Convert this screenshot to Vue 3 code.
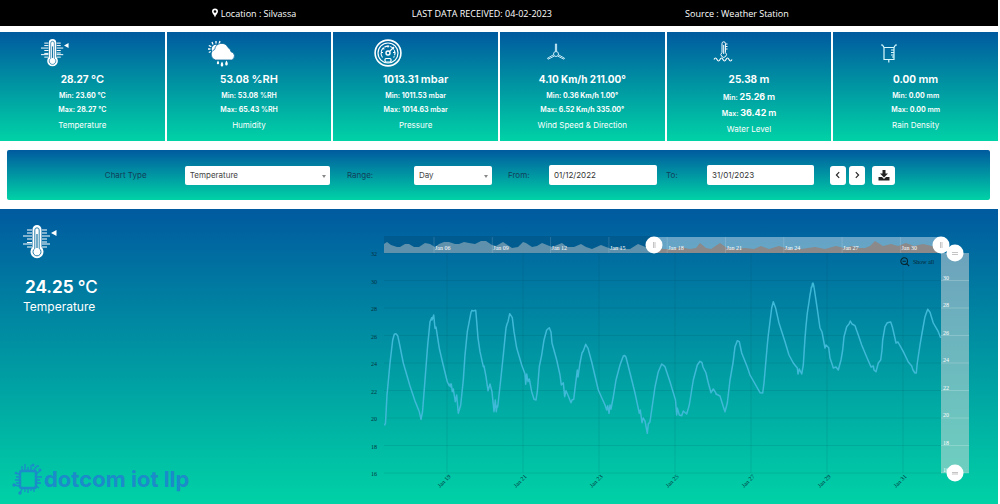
<script setup>
import { ref } from 'vue'

const cards = [
  { icon: 'thermo', value: '28.27', unit: '°C', min: '23.60', max: '28.27', label: 'Temperature' },
  { icon: 'cloud', value: '53.08', unit: '%RH', min: '53.08', max: '65.43', label: 'Humidity' },
  { icon: 'gauge', value: '1013.31', unit: 'mbar', min: '1011.53', max: '1014.63', label: 'Pressure' },
  { icon: 'wind', value: '4.10 Km/h 211.00°', unit: '', min: '0.36 Km/h 1.00°', max: '6.52 Km/h 335.00°', label: 'Wind Speed & Direction' },
  { icon: 'level', value: '25.38', unit: 'm', min: '25.26', max: '36.42', label: 'Water Level', large: true },
  { icon: 'rain', value: '0.00', unit: 'mm', min: '0.00', max: '0.00', label: 'Rain Density' }
]

const chartType = ref('Temperature')
const range = ref('Day')
const from = ref('01/12/2022')
const to = ref('31/01/2023')

const rows = [32, 30, 28, 26, 24, 22, 20, 18, 16].map((v, i) => ({ v, y: 44 + i * 27.5 }))
const days = ['19', '21', '23', '25', '27', '29', '31'].map((d, i) => ({ d, x: 87 + i * 76 }))
const overview = ['06', '09', '12', '15', '18', '21', '24', '27', '30'].map((d, i) => ({ d, x: 74 + i * 58.3 }))

const series = `384.5,425.5 385.5,423 387,395 390,363 392.7,340 394.3,334.3 396,333.7 397.7,335.7 399.3,343 403.3,363 410,386 415,401 419.3,411.7 421,419.3 422.5,412 425,380 427.7,345 430,321.7 431.7,317.7 432,320 433.7,315 435,328.3 436,327 439.3,348.3 442.7,363 447.3,381.7 449.3,386 450,384 451,387 451.3,384 452.3,391.7 453.3,389 455.3,401.7 456.7,395 458.3,413.3 460.7,405 463.3,380 465,355 467.3,331.7 471,312.3 472,310.3 473,311 475.7,310.3 476.3,316.7 478,338 480,351.7 483.3,366.7 484,366 486,376.7 488,390.7 490,384 492,391.7 494,411.7 495.3,400 496.3,411.7 497,406 497.7,407 500.7,380 503.3,355 506,328 507,324 508,321.7 509.7,313.7 512.3,317.7 514,331.7 516.7,348 521.7,365 525,374 525.7,384.3 526.7,374 528,381.7 529.3,379 531.7,391.7 534,399.3 536,400 537.3,391.7 539.3,366.7 541.7,355 544,340 546.7,330 549.3,327.7 551,332 552,343 556.7,360 560,375 561.3,385 563.3,382.7 564.7,396.7 566,390.7 568.3,396 571,402.7 572,400 573.7,399.3 575.7,383 577.3,370 578,377 580,363 582,353 583.3,351 585.7,344.3 588,348.3 591.7,362 598.3,390 605,405 606.7,410 607.7,405.7 609,413.3 610,405 611,409 613.3,397 616,380 620,365 623.3,356 624.7,355.5 626,357.3 630,373 635,393 639.3,413.3 640.3,410 642,422.7 643.3,418 645,421 647.3,433.3 648.3,424 650,421.7 652.7,403 655,387 658.3,371.7 661.7,364 665,366.7 670,381.7 675.5,400 676.7,415 677.3,408 679.3,415 681.7,415.7 683.3,411 686.7,414 689.3,405 693.3,380 697.3,365 700,361.3 702,362.7 703,367 706,373 708.3,383 711,392.7 713.3,389 715.7,392.7 716,394 720,396 723.3,406.7 725,411.7 727.3,403 730,380 733,363 735,346.7 737.3,340.7 739.3,341.7 741.7,353 747.3,367 750,375 760,392.7 762.7,393 764,383 767.3,345 768.3,335 771.7,308 773.3,301.7 775.7,308.3 779,323 785,341.7 789,355 793.3,363 797.3,368 798,374 799.3,369 801.7,374 803.3,365 805,338 806,326 807.3,313 809,302 810,295 811,290 811.3,287 812,287 812.3,284 813,283 814,287 816.7,305 820,328 822,332 825,348 826,345 828.7,347.7 830,358 831.7,363 833.3,368 836,367 838.3,370 841,360 842.7,350 844,336.7 846.7,326.7 849,324 850.3,321 852,324 855,325.7 858.3,335 861.7,345 866.7,357 871,367 873.3,366 874,370 876,371.7 878.3,363 880.7,360 882,350 882.7,340 885,326.7 887.3,322.7 890.7,322 892.3,326.7 894,334 896,343 898,342 903.3,351.7 908.3,362 911.7,366 913,370 915,373 916.3,373 917.3,363 920,345 921.7,335 925,316.7 927.7,309.3 930,312.3 933.3,323 938.3,331.7 940.7,338`

const overviewLeft = `384,253 384,244 387,242 391,245 397,247 400,247 405,244 409,244 414,247 419,247 425,243 430,244 435,247 439,244 444,242 449,242 455,244 459,244 464,242 469,243 475,244 481,241 486,241 492,245 496,246 503,242 506,244 512,248 518,247 523,242 526,243 532,247 537,246 542,243 547,245 552,247 557,245 562,243 567,247 574,247 581,244 586,247 592,249 601,245 606,247 612,249 618,247 624,249 630,249 638,244 643,246 648,248 653,247 653,253`
const overviewRight = `653,253 653,247 659,248 664,249 674,249 680,247 690,249 696,248 700,243 706,248 711,249 720,243 727,248 736,249 745,248 754,249 761,246 769,249 779,246 789,249 801,249 815,247 825,249 836,246 844,248 852,246 859,248 865,248 870,246 875,241 883,246 891,244 898,246 906,243 914,246 923,244 932,246 941,245 941,253`
</script>

<template>
  <div class="page">
    <svg class="defs" width="0" height="0" aria-hidden="true">
      <symbol id="thermo" viewBox="0 0 34 34">
        <g fill="none" stroke="#fff" stroke-width="1.2">
          <path d="M4 5h5M0 11h9M4 8h5M4 14h5M4 17.500h5M0 19h9M4 22h5M19 5h5M19 8h5M19 11h8M19 14h5M19 17h5M19 19h8M19 22h5" />
        </g>
        <path d="M14 0a4.500 4.500 0 0 0-4.500 4.500V22a6.500 6.500 0 1 0 9 0V4.500A4.500 4.500 0 0 0 14 0z" fill="#fff" />
        <path d="M11.800 5a2.200 2.200 0 0 1 4.400 0v18.500a4 4 0 1 1-4.400 0z" fill="none" stroke="#1473a2" stroke-width=".9" />
        <path d="M14 9v14" stroke="#1473a2" stroke-width="1.200" />
        <path d="M28 8l5.500-3v6z" fill="#fff" />
      </symbol>
      <symbol id="cloud" viewBox="0 0 28 28">
        <g stroke="#fff" stroke-width="1.300"><path d="M8 2v2.500M4 3l1 2.500M.800 6.500l2.500 1.200M0 10h2.500M.800 13.500l2-1M12 2l-1 3" /></g>
        <circle cx="8" cy="10" r="4.300" fill="#fff" />
        <path d="M7.500 21a5.500 5.500 0 0 1-.8-10.500A7 7 0 0 1 20 8.500a5.500 5.500 0 0 1 3 4.200A4.300 4.300 0 0 1 23.500 21z" fill="#fff" stroke="#086a9e" stroke-width=".8" />
        <path d="M10 21.500c-1.900 2.800-1 3.700 0 3.700s1.900-.9 0-3.700zM14 22.500c-2.200 3.200-1.200 5 0 5s2.200-1.800 0-5zM18.500 21.500c-2.200 3.200-1.200 5 0 5s2.200-1.800 0-5z" fill="#fff" />
      </symbol>
      <symbol id="gauge" viewBox="0 0 28 28">
        <g fill="none" stroke="#fff">
          <circle cx="14" cy="14" r="12.900" stroke-width="1.600" />
          <circle cx="14" cy="14" r="10" stroke-width="1.200" />
          <path d="M8.500 18.500a7 7 0 1 1 11 0" stroke-width="1.100" stroke-dasharray="5 .8" />
          <path d="M14 6.500v2M7 13.500h2M19 13.500h2M9 9l1.300 1.300M15 13l5-5" stroke-width="1.200" />
          <circle cx="14" cy="14" r="2" stroke-width="1.400" />
          <rect x="11" y="19.500" width="6" height="3.500" rx="1" stroke-width="1.200" />
        </g>
      </symbol>
      <symbol id="wind" viewBox="0 0 28 28">
        <g fill="none" stroke="#d9f4ff" stroke-width=".9" stroke-linejoin="round">
          <circle cx="15" cy="15" r="2.500" />
          <path d="M14.400 12.500V5h1.200v7.500M12.500 15.800L6.500 19.200l.6 1 6-3M17.500 15.800l6 3.400-.6 1-6-3" />
        </g>
      </symbol>
      <symbol id="level" viewBox="0 0 28 28">
        <g fill="none" stroke="#fff" stroke-width="1">
          <path d="M14 13.500V4.500a1.700 1.700 0 0 1 3.400 0v9a2.700 2.700 0 1 1-3.400 0z" />
          <path d="M15.700 6v9M17.500 5h2M17.500 7.500h2M17.500 10h2" />
          <path d="M6 20.500c1-2 2-2 3 0s2 2 3 0 2-2 3 0 2 2 3 0 2-2 3 0 2 2 3 0" stroke-width="1.200" />
        </g>
      </symbol>
      <symbol id="rain" viewBox="0 0 28 28">
        <path d="M7 6h1.500l1.500 2.500v12h10v-12L21.500 6H23M10 8.500h10M14.800 20.500v3M17 11h3M17 13.500h3M17 16h3M18 18h2" fill="none" stroke="#d9fbff" stroke-width="1.200" />
      </symbol>
    </svg>

    <header class="topbar">
      <span class="location">
        <svg viewBox="0 0 12 18" aria-hidden="true"><path fill-rule="evenodd" d="M6 0a6 6 0 0 0-6 6c0 4 4.500 6 6 12 1.500-6 6-8 6-12a6 6 0 0 0-6-6zm0 3.300a2.700 2.700 0 1 1 0 5.400 2.700 2.700 0 0 1 0-5.400z" fill="#fff" /></svg>
        Location : Silvassa
      </span>
      <span>LAST DATA RECEIVED: 04-02-2023</span>
      <span>Source : Weather Station</span>
    </header>

    <section class="cards">
      <article v-for="c in cards" :key="c.label" class="card" :class="{ large: c.large }">
        <svg class="card-icon" aria-hidden="true"><use :href="'#' + c.icon" /></svg>
        <p class="value">{{ c.value }} <span v-if="c.unit">{{ c.unit }}</span></p>
        <p class="stat">Min: <b>{{ c.min }}</b> <small>{{ c.unit }}</small></p>
        <p class="stat">Max: <b>{{ c.max }}</b> <small>{{ c.unit }}</small></p>
        <p class="name">{{ c.label }}</p>
      </article>
    </section>

    <form class="filters" @submit.prevent>
      <label for="type">Chart Type</label>
      <div class="select">
        <select id="type" v-model="chartType"><option v-for="c in cards" :key="c.label">{{ c.label }}</option></select>
      </div>
      <label for="range">Range:</label>
      <div class="select">
        <select id="range" v-model="range"><option>Day</option><option>Week</option><option>Month</option></select>
      </div>
      <label for="from">From:</label>
      <input id="from" v-model="from" type="text">
      <label for="to">To:</label>
      <input id="to" v-model="to" type="text">
      <div class="actions">
        <button type="button" aria-label="Previous"><svg viewBox="0 0 10 10"><path d="M6.500 1.500L3 5l3.500 3.500" /></svg></button>
        <button type="button" aria-label="Next"><svg viewBox="0 0 10 10"><path d="M3.500 1.500L7 5 3.500 8.500" /></svg></button>
        <button type="button" class="download" aria-label="Download"><svg viewBox="0 0 12 12"><path d="M4.500 1h3v3.500H10L6 8.500 2 4.500h2.500zM.500 8H4l2 2 2-2h3.500v3.500H.500z" /></svg></button>
      </div>
    </form>

    <main class="detail">
      <aside class="summary">
        <svg class="big-icon" aria-hidden="true"><use href="#thermo" /></svg>
        <p class="big-value">24.25 <span>°C</span></p>
        <p class="big-name">Temperature</p>
        <div class="brand">
          <svg viewBox="0 0 32 32" aria-hidden="true">
            <rect x="8" y="8" width="16" height="17" rx="2" fill="none" stroke="#1b8bc9" stroke-width="2.500" />
            <path d="M10 7V3M13 7V1M16 7V4M19 7V2M22 7l3-4h2M24 11l4-3M25 14h5M25 17h3M25 20h4M24 23l3 2M22 26v3M19 26v2M16 26v4M13 26v3M10 26l-2 4M7 23l-5-1M7 20H4M7 17H3M7 14H4M7 11L3 10" fill="none" stroke="#1b8bc9" stroke-width="1.300" />
            <g fill="#1b8bc9"><circle cx="21" cy="2" r="1.500" /><circle cx="28" cy="7" r="1.500" /><circle cx="2" cy="22" r="1.700" /><circle cx="8" cy="30" r="1.700" /><circle cx="4" cy="10" r="1.300" /></g>
          </svg>
          <span>dotcom iot llp</span>
        </div>
      </aside>

      <div class="chart">
        <svg class="plot" viewBox="0 0 638 295" role="img" aria-label="Temperature over time">
          <g stroke="#003c50" stroke-opacity=".13" stroke-width="1">
            <line v-for="r in rows" :key="r.v" x1="24" x2="581" :y1="r.y" :y2="r.y" />
            <line v-for="d in days" :key="d.d" :x1="d.x" :x2="d.x" y1="44" y2="264" />
          </g>
          <rect x="24" y="27" width="269" height="17" fill="#00507f" fill-opacity=".5" />
          <rect x="293" y="28" width="288" height="16" fill="#fff" fill-opacity=".4" />
          <g transform="translate(-360 -209)">
            <polygon :points="overviewLeft" fill="#5f91ac" />
            <polygon :points="overviewRight" fill="#8b8989" />
          </g>
          <g class="axis light">
            <template v-for="o in overview" :key="o.d">
              <line :x1="o.x" :x2="o.x" y1="28" y2="44" stroke="#fff" stroke-opacity=".15" />
              <text :x="o.x + 1" y="41">Jan {{ o.d }}</text>
            </template>
          </g>
          <g transform="translate(-360 -209)">
            <polyline :points="series" fill="none" stroke="#3fb9d8" stroke-width="1.500" stroke-linejoin="round" />
          </g>
          <rect x="581" y="44" width="28" height="220" fill="#d9d9d9" fill-opacity=".5" />
          <g class="axis">
            <text v-for="r in rows" :key="r.v" x="17" :y="r.y + 3" text-anchor="end">{{ r.v }}</text>
            <text v-for="d in days" :key="d.d" :transform="`translate(${d.x + 4} 268) rotate(-45)`" text-anchor="end">Jan {{ d.d }}</text>
          </g>
          <g class="axis light">
            <template v-for="r in rows.slice(1)" :key="r.v">
              <line x1="581" x2="609" :y1="r.y" :y2="r.y" stroke="#fff" stroke-opacity=".2" />
              <text x="583" :y="r.y - 1">{{ r.v }}</text>
            </template>
          </g>
          <g fill="#fff">
            <circle cx="294" cy="36" r="8.500" /><circle cx="581" cy="36" r="8.500" />
            <circle cx="595" cy="44" r="8.500" /><circle cx="595" cy="264" r="8.500" />
          </g>
          <path d="M293.500 33v6M295 33v6M580.500 33v6M582 33v6M592 43.500h6M592 45.500h6M592 263.500h6M592 265h6" stroke="#aaa" stroke-width=".7" />
        </svg>
        <button type="button" class="show-all">
          <svg viewBox="0 0 12 12" aria-hidden="true"><circle cx="5" cy="5" r="4" /><path d="M3 5h4M8 8l3 3" /></svg>
          Show all
        </button>
      </div>
    </main>
  </div>
</template>

<style>
body { margin: 0; background: #fff; }
</style>

<style scoped>
.page {
  --grad: linear-gradient(#005a9f, #00d2a6);
  display: flex;
  flex-direction: column;
  min-height: 100vh;
  padding-right: 2px;
  box-sizing: border-box;
  font-family: Inter, "Liberation Sans", sans-serif;
  color: #fff;
}
.page * { box-sizing: border-box; }
.defs { position: absolute; }
p { margin: 0; }
.topbar {
  display: grid;
  grid-template-columns: 228fr 227fr 282fr;
  padding: 0 12% 0 14%;
  height: 26px;
  align-items: center;
  text-align: center;
  background: #000;
  font-family: "Open Sans", "Noto Sans", sans-serif;
  font-size: 9px;
}
.location { display: flex; justify-content: center; align-items: center; gap: 3px; }
.location svg { width: 6px; height: 10px; }
.cards {
  display: grid;
  grid-template-columns: repeat(6, 1fr);
  gap: 2px;
  margin-top: 6px;
}
.card {
  min-height: 109px;
  padding-top: 7px;
  background: var(--grad);
  text-align: center;
}
.card-icon { display: block; width: 28px; height: 28px; margin-left: 25%; }
.value { margin-top: 5px; font-size: 10px; line-height: 15px; font-weight: 700; }
.value span { font-size: 11px; font-weight: 600; }
.stat { font-size: 7px; line-height: 14px; font-weight: 600; }
.value + .stat { margin-top: 2px; }
.stat b { font-weight: 700; }
.stat small { font-size: 7px; }
.name { font-size: 8px; line-height: 16px; }
.large .stat { line-height: 15px; }
.large .stat b, .large .stat small { font-size: 9px; }
.filters {
  display: grid;
  grid-template-columns: 80fr 145fr 17fr 67fr 78fr 16fr 41fr 108fr 9fr 41fr 107fr 16fr 62fr;
  align-items: center;
  margin: 9px 8px 0 7px;
  padding: 0 9.8%;
  height: 50px;
  border-radius: 2px;
  background: var(--grad);
  color: #12405a;
  font-size: 8px;
}
.filters label[for="range"] { grid-column: 4; }
.filters label[for="from"] { grid-column: 7; }
.filters label[for="to"] { grid-column: 10; }
.actions { grid-column: 13; display: flex; gap: 3px; min-width: 0; }
.select { position: relative; display: flex; }
.select::after {
  content: "";
  position: absolute;
  right: 4px;
  top: 9px;
  border: 2px solid transparent;
  border-top: 3px solid #888;
  pointer-events: none;
}
select, input {
  appearance: none;
  width: 100%;
  min-width: 0;
  height: 19px;
  padding: 0 5px;
  border: 0;
  border-radius: 2px;
  background: #fff;
  color: #444;
  font: inherit;
}
input { height: 20px; color: #333; }
button { font: inherit; cursor: pointer; }
.actions button {
  display: flex;
  align-items: center;
  justify-content: center;
  flex: none;
  width: 16px;
  height: 19px;
  padding: 0;
  border: 0;
  border-radius: 3px;
  background: #fff;
}
.actions .download { width: 23px; margin-left: 4px; }
.actions svg { width: 8px; height: 8px; fill: none; stroke: #222; stroke-width: 1.400; }
.actions .download svg { width: 12px; height: 12px; fill: #222; stroke: none; }
.detail {
  flex: 1;
  display: grid;
  grid-template-columns: 360fr 638fr;
  margin-top: 9px;
  background: var(--grad);
}
.summary { display: flex; flex-direction: column; padding: 16px 0 9px 12px; }
.big-icon { width: 34px; height: 34px; margin-left: 11px; }
.big-value { margin: 17px 0 0 13px; font-size: 17px; line-height: 22px; font-weight: 700; }
.big-value span { font-weight: 500; }
.big-name { margin-left: 11px; font-size: 12px; line-height: 18px; }
.brand {
  display: flex;
  align-items: center;
  margin-top: auto;
  color: #1b8bc9;
  font-size: 22px;
  line-height: 32px;
  font-weight: 700;
}
.brand svg { width: 32px; height: 32px; }
.chart { position: relative; }
.plot { display: block; width: 100%; }
.axis { font-family: "Liberation Serif", serif; font-size: 6px; fill: #06323c; }
.light { fill: #fff; }
.show-all {
  position: absolute;
  top: 48px;
  right: 10%;
  display: flex;
  align-items: center;
  gap: 3px;
  padding: 0;
  border: 0;
  background: none;
  color: #06262f;
  font-family: "Liberation Serif", serif;
  font-size: 6px;
}
.show-all svg { width: 10px; height: 10px; fill: none; stroke: #06262f; stroke-width: 1.300; }
</style>
